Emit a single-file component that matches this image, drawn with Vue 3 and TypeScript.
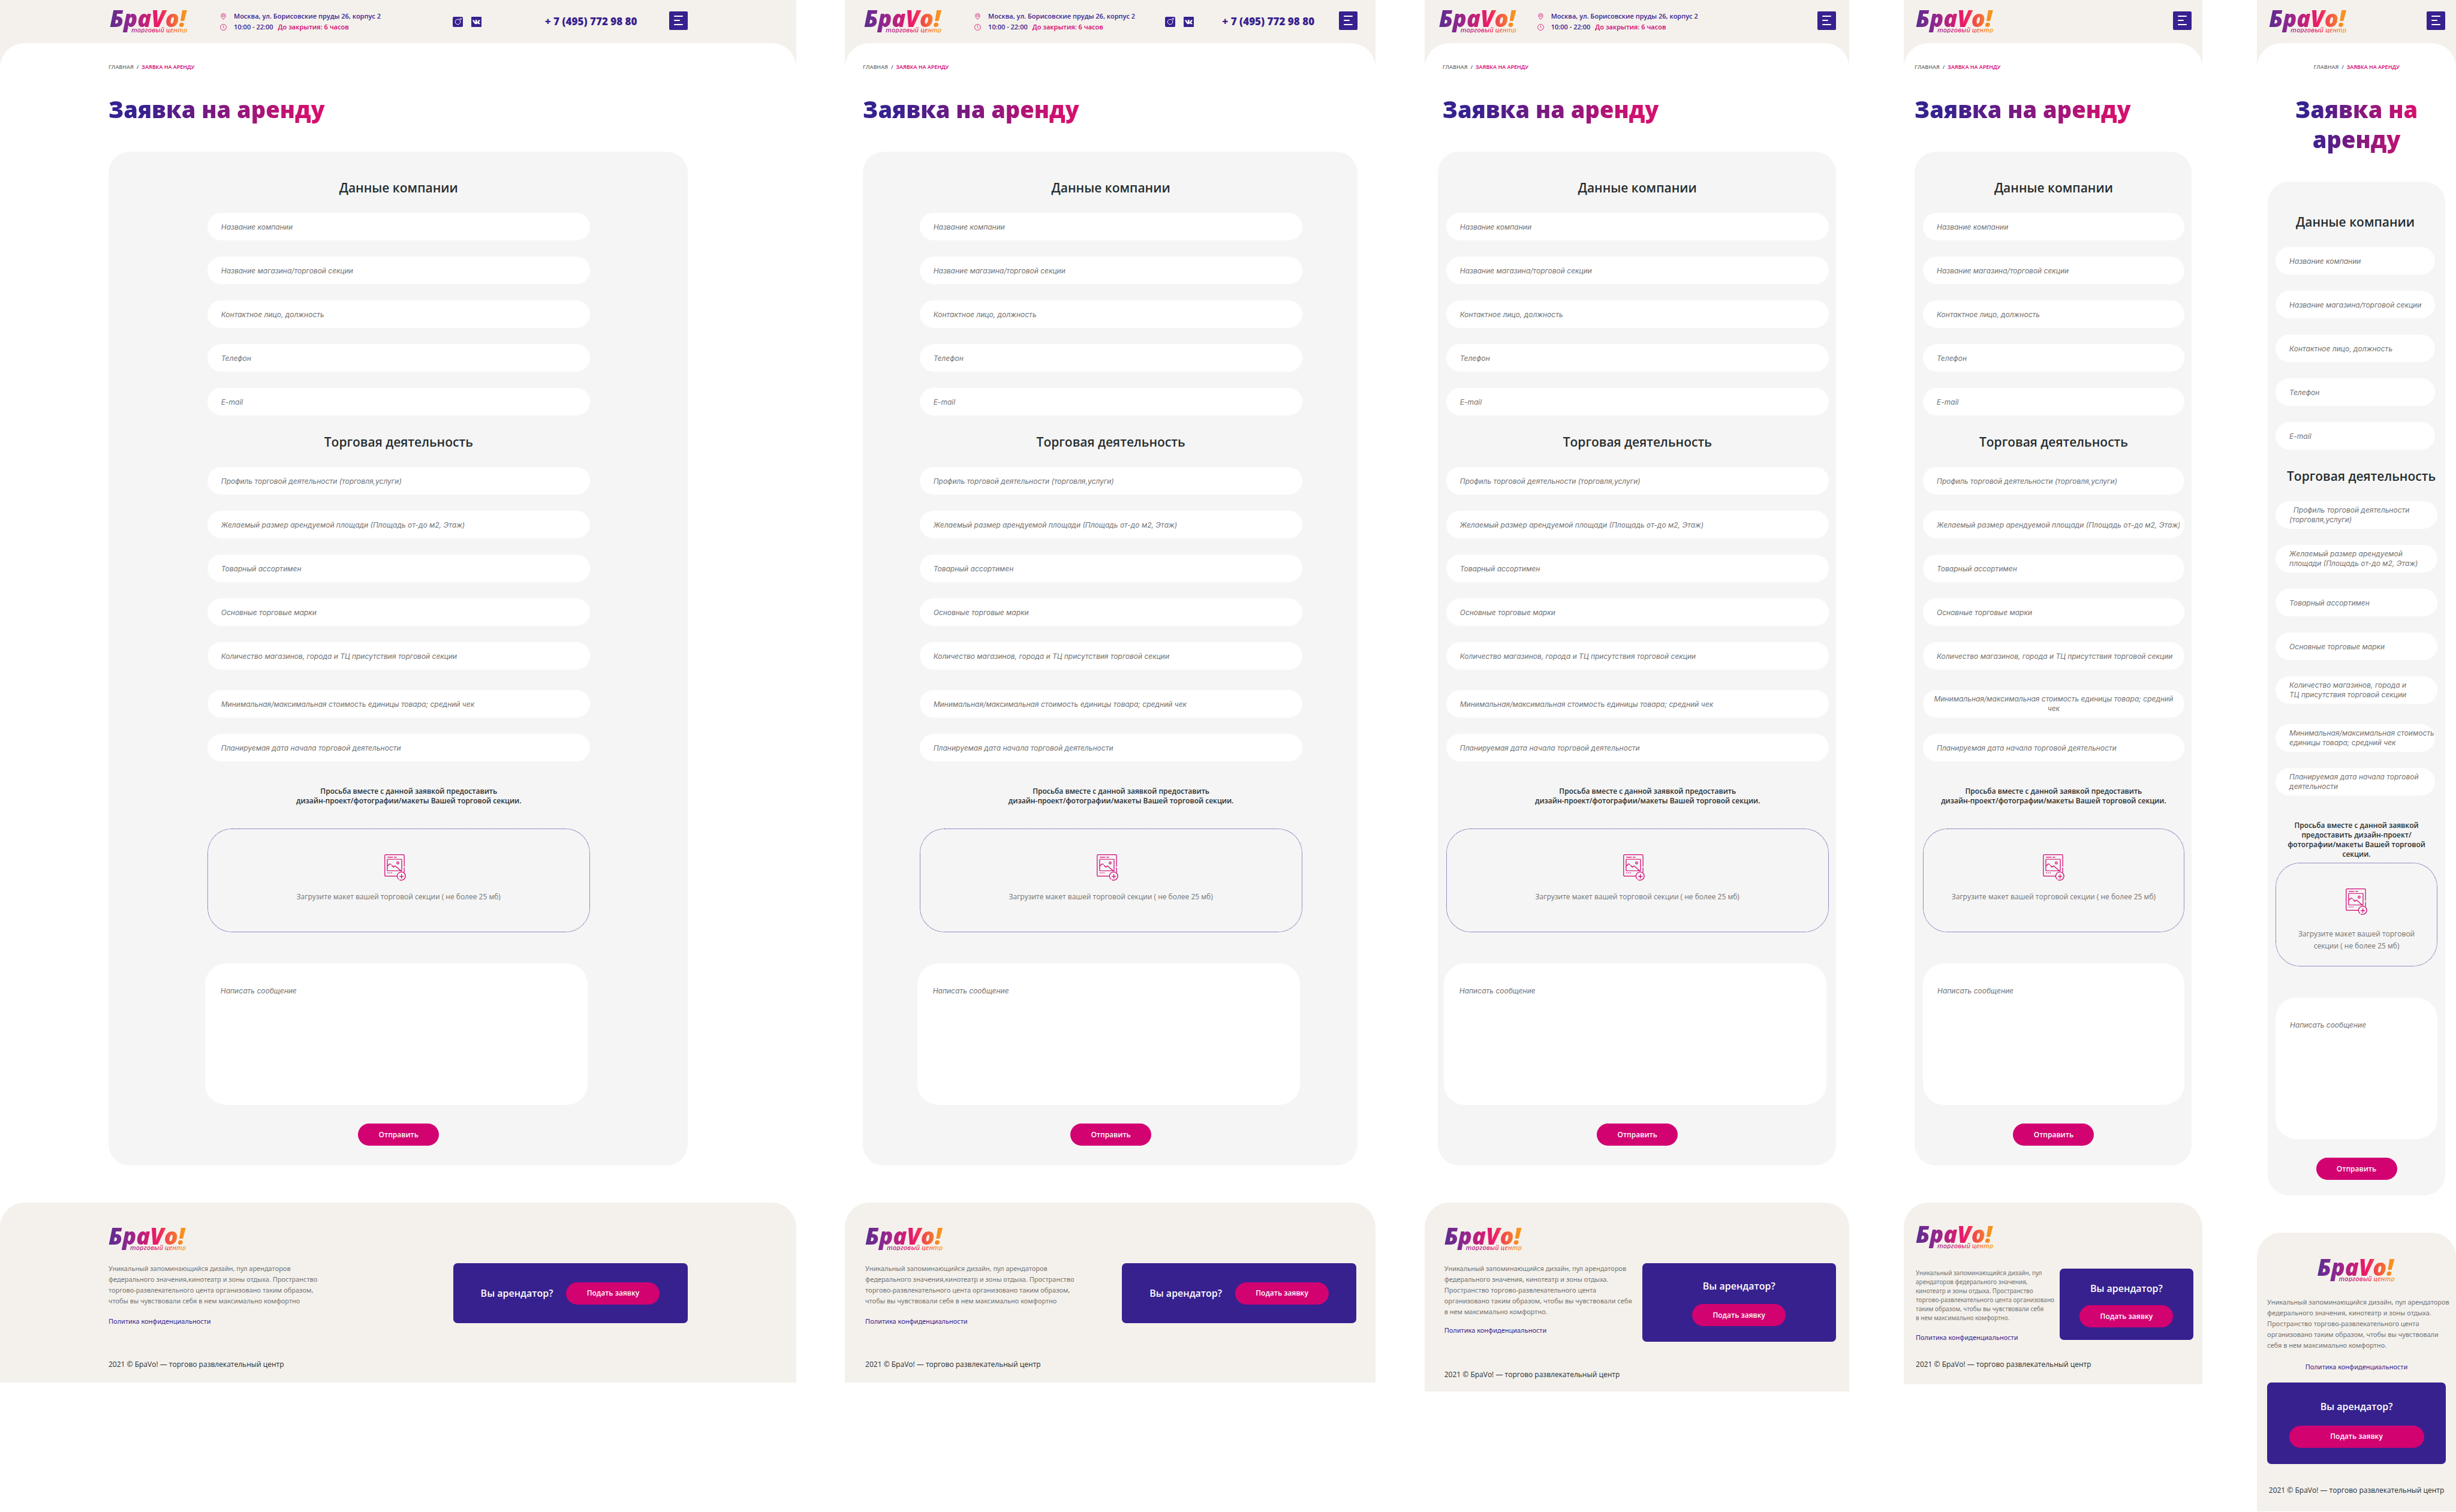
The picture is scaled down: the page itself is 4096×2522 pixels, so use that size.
<script setup lang="ts">
interface Field {
  name: string
  text: string
  rows?: number
  centered?: boolean
}

interface Group {
  key: string
  title?: string
  fields: Field[]
}

interface Board {
  id: string
  info: boolean
  contacts: boolean
  request: string
  upload: string
  about: string
  groups: Group[]
}

const contact: Group = {
  key: 'contact',
  title: 'Данные компании',
  fields: [
    { name: 'company', text: 'Название компании' },
    { name: 'shop', text: 'Название магазина/торговой секции' },
    { name: 'person', text: 'Контактное лицо, должность' },
    { name: 'phone', text: 'Телефон' },
    { name: 'email', text: 'E-mail' },
  ],
}

const trade: Group = {
  key: 'trade',
  title: 'Торговая деятельность',
  fields: [
    { name: 'profile', text: 'Профиль торговой деятельности (торговля,услуги)' },
    { name: 'area', text: 'Желаемый размер арендуемой площади (Площадь от-до м2, Этаж)' },
    { name: 'goods', text: 'Товарный ассортимен' },
    { name: 'brands', text: 'Основные торговые марки' },
    { name: 'shops', text: 'Количество магазинов, города и ТЦ присутствия торговой секции' },
  ],
}

const terms: Group = {
  key: 'terms',
  fields: [
    { name: 'price', text: 'Минимальная/максимальная стоимость единицы товара; средний чек' },
    { name: 'start', text: 'Планируемая дата начала торговой деятельности' },
  ],
}

const termsTablet: Group = {
  key: 'terms',
  fields: [
    {
      name: 'price',
      text: 'Минимальная/максимальная стоимость единицы товара; средний\nчек',
      rows: 2,
      centered: true,
    },
    { name: 'start', text: 'Планируемая дата начала торговой деятельности' },
  ],
}

const tradeMobile: Group = {
  key: 'trade',
  title: 'Торговая деятельность',
  fields: [
    { name: 'profile', text: '  Профиль торговой деятельности\n(торговля,услуги)', rows: 2 },
    { name: 'area', text: 'Желаемый размер арендуемой\nплощади (Площадь от-до м2, Этаж)', rows: 2 },
    { name: 'goods', text: 'Товарный ассортимен' },
    { name: 'brands', text: 'Основные торговые марки' },
    { name: 'shops', text: 'Количество магазинов, города и\nТЦ присутствия торговой секции', rows: 2 },
  ],
}

const termsMobile: Group = {
  key: 'terms',
  fields: [
    { name: 'price', text: 'Минимальная/максимальная стоимость\nединицы товара; средний чек', rows: 2 },
    { name: 'start', text: 'Планируемая дата начала торговой\nдеятельности', rows: 2 },
  ],
}

const request =
  'Просьба вместе с данной заявкой предоставить\nдизайн-проект/фотографии/макеты Вашей торговой секции.'
const upload = 'Загрузите макет вашей торговой секции ( не более 25 мб)'
const aboutWide =
  'Уникальный запоминающийся дизайн, пул арендаторов\nфедерального значения,кинотеатр и зоны отдыха. Пространство\nторгово-развлекательного цента организовано таким образом,\nчтобы вы чувствовали себя в нем максимально комфортно'

const boards: Board[] = [
  { id: 'xl', info: true, contacts: true, request, upload, about: aboutWide, groups: [contact, trade, terms] },
  { id: 'lg', info: true, contacts: true, request, upload, about: aboutWide, groups: [contact, trade, terms] },
  {
    id: 'md',
    info: true,
    contacts: false,
    request,
    upload,
    about:
      'Уникальный запоминающийся дизайн, пул арендаторов\nфедерального значения, кинотеатр и зоны отдыха.\nПространство торгово-развлекательного цента\nорганизовано таким образом, чтобы вы чувствовали себя\nв нем максимально комфортно.',
    groups: [contact, trade, terms],
  },
  {
    id: 'sm',
    info: false,
    contacts: false,
    request,
    upload,
    about:
      'Уникальный запоминающийся дизайн, пул\nарендаторов федерального значения,\nкинотеатр и зоны отдыха. Пространство\nторгово-развлекательного цента организовано\nтаким образом, чтобы вы чувствовали себя\nв нем максимально комфортно.',
    groups: [contact, trade, termsTablet],
  },
  {
    id: 'xs',
    info: false,
    contacts: false,
    request:
      'Просьба вместе с данной заявкой\nпредоставить дизайн-проект/\nфотографии/макеты Вашей торговой\nсекции.',
    upload: 'Загрузите макет вашей торговой\nсекции ( не более 25 мб)',
    about:
      'Уникальный запоминающийся дизайн, пул арендаторов\nфедерального значения, кинотеатр и зоны отдыха.\nПространство торгово-развлекательного цента\nорганизовано таким образом, чтобы вы чувствовали\nсебя в нем максимально комфортно.',
    groups: [contact, tradeMobile, termsMobile],
  },
]
</script>

<template>
  <div class="boards">
    <div v-for="b in boards" :key="b.id" class="board" :class="`board--${b.id}`">
      <div class="shell">
        <header class="header">
          <a class="logo" href="#">
            <span class="logo-name">БраVo!</span>
            <span class="logo-sub">торговый центр</span>
          </a>
          <div v-if="b.info" class="info">
            <p class="info-row">
              <svg class="info-icon" viewBox="0 0 16 16" aria-hidden="true">
                <path d="M8 15.2C5.200 12 2.600 9.500 2.600 6.200a5.400 5.400 0 0 1 10.800 0C13.400 9.500 10.800 12 8 15.200z" />
                <circle cx="8" cy="6.300" r="2.300" />
              </svg>
              <span>Москва, ул. Борисовские пруды 26, корпус 2</span>
            </p>
            <p class="info-row">
              <svg class="info-icon" viewBox="0 0 16 16" aria-hidden="true">
                <circle cx="8" cy="8" r="7.200" />
                <path d="M7.800 3.800V8l2.500 3" />
              </svg>
              <span>10:00 - 22:00</span>
              <span class="info-left">До закрытия: 6 часов</span>
            </p>
          </div>
          <div v-if="b.contacts" class="social">
            <a href="#" aria-label="Instagram">
              <svg viewBox="0 0 24 24">
                <rect width="24" height="24" rx="3" />
                <circle class="ring" cx="12" cy="12" r="6" />
                <circle class="ring" cx="18.800" cy="5" r="1.800" />
              </svg>
            </a>
            <a href="#" aria-label="VK">
              <svg viewBox="0 0 24 24">
                <rect width="24" height="24" rx="1" />
                <path
                  class="glyph"
                  transform="translate(3 3.200) scale(.75)"
                  d="M13.162 18.994c.609 0 .858-.406.851-.915-.031-1.917.714-2.949 2.059-1.604 1.488 1.488 1.796 2.519 3.603 2.519h3.200c.808 0 1.126-.26 1.126-.668 0-.863-1.421-2.386-2.625-3.504-1.686-1.565-1.765-1.602-.313-3.486 1.801-2.339 4.157-5.336 2.073-5.336h-3.981c-.772 0-.828.435-1.103 1.083-.995 2.347-2.886 5.387-3.604 4.922-.751-.485-.407-2.406-.35-5.261.015-.754.011-1.271-1.141-1.539-.629-.145-1.241-.205-1.809-.205-2.273 0-3.841.953-2.950 1.119 1.571.293 1.420 3.692 1.054 5.160-.638 2.556-3.036-2.024-4.035-4.305-.241-.548-.315-.974-1.175-.974h-3.255c-.492 0-.787.16-.787.516 0 .602 2.960 6.720 5.786 9.770 2.756 2.975 5.480 2.708 7.376 2.708z"
                />
              </svg>
            </a>
          </div>
          <a v-if="b.contacts" class="phone" href="tel:+74957729880">+ 7 (495) 772 98 80</a>
          <button class="burger" type="button" aria-label="Меню">
            <i></i>
            <i class="short"></i>
            <i></i>
          </button>
        </header>

        <main class="main">
          <nav class="crumbs">
            <a href="#">ГЛАВНАЯ</a>
            <span class="slash">/</span>
            <span class="current">ЗАЯВКА НА АРЕНДУ</span>
          </nav>
          <h1 class="title">Заявка на аренду</h1>

          <form class="card" @submit.prevent>
            <fieldset v-for="g in b.groups" :key="g.key" class="group" :class="`group--${g.key}`">
              <h2 v-if="g.title" class="heading">{{ g.title }}</h2>
              <template v-for="f in g.fields" :key="f.name">
                <textarea
                  v-if="f.rows"
                  class="field field--lines"
                  :class="{ 'field--centered': f.centered }"
                  :name="f.name"
                  :rows="f.rows"
                  :placeholder="f.text"
                  :aria-label="f.text"
                ></textarea>
                <input
                  v-else
                  class="field"
                  type="text"
                  :name="f.name"
                  :placeholder="f.text"
                  :aria-label="f.text"
                />
              </template>
            </fieldset>

            <p class="request">{{ b.request }}</p>

            <label class="upload">
              <input class="file" type="file" />
              <svg class="upload-icon" viewBox="0 0 52 64" aria-hidden="true">
                <path d="M31 53H3a2 2 0 0 1-2-2V3a2 2 0 0 1 2-2h43a2 2 0 0 1 2 2v26M48 33v10" />
                <path d="M8 7h12M24 7h5" />
                <rect x="7" y="12" width="35" height="28" rx="1" />
                <path d="M8 28l4-4q2-2 4 1M18 27l4 4 4-3 14 12" />
                <circle cx="32.500" cy="21" r="2.500" />
                <path d="M8 45h1M12.500 45h1M17 45h1" />
                <path d="M34 60a10 10 0 1 1 3 2M41.500 49v9M37 53.500h9" />
              </svg>
              <span class="upload-text">{{ b.upload }}</span>
            </label>

            <textarea
              class="message"
              name="message"
              placeholder="Написать сообщение"
              aria-label="Написать сообщение"
            ></textarea>
            <button class="pill submit" type="submit">Отправить</button>
          </form>
        </main>
      </div>

      <footer class="footer">
        <a class="logo" href="#">
          <span class="logo-name">БраVo!</span>
          <span class="logo-sub">торговый центр</span>
        </a>
        <div class="footer-row">
          <div class="footer-text">
            <p class="about">{{ b.about }}</p>
            <a class="policy" href="#">Политика конфиденциальности</a>
          </div>
          <section class="tenant">
            <h3>Вы арендатор?</h3>
            <button class="pill tenant-button" type="button">Подать заявку</button>
          </section>
        </div>
        <p class="copyright">2021 © БраVo! — торгово развлекательный центр</p>
      </footer>
    </div>
  </div>
</template>

<style>
body {
  background: #fff;
}
</style>

<style scoped>
* {
  box-sizing: border-box;
}

p,
h1,
h2,
h3 {
  margin: 0;
}

a {
  color: inherit;
  text-decoration: none;
}

.boards {
  display: grid;
  grid-template-columns:
    minmax(0, 1920fr) minmax(0, 118fr) minmax(0, 1280fr) minmax(0, 118fr) minmax(0, 1024fr)
    minmax(0, 132fr) minmax(0, 720fr) minmax(0, 132fr) minmax(0, 480fr);
  align-items: start;
  font-family: 'Open Sans', 'Noto Sans', sans-serif;
  color: #262d2f;
}

.board {
  --pad: 18px;
  --text-pad: 18px;
  --footer-pad: 20px;
}

.board--xl {
  --pad: 181px;
  --text-pad: 181px;
  --footer-pad: 181px;
  grid-column: 1;
}

.board--lg {
  --pad: 30px;
  --text-pad: 30px;
  --footer-pad: 34px;
  grid-column: 3;
}

.board--md {
  --pad: 22px;
  --text-pad: 30px;
  --footer-pad: 33px;
  grid-column: 5;
}

.board--sm {
  grid-column: 7;
}

.board--xs {
  --footer-pad: 18px;
  grid-column: 9;
}

.shell,
.footer {
  background: #f4f1ec;
}

.header {
  display: flex;
  align-items: center;
  height: 72px;
  padding: 0 var(--pad) 0 calc(var(--pad) + 2px);
  white-space: nowrap;
}

.logo {
  display: block;
  width: 131px;
  height: 38px;
  background: linear-gradient(90deg, #5b2d8e, #8f278f 25%, #ee1a68 62%, #f7931e 94%);
  background-clip: text;
  color: transparent;
  font-style: italic;
  white-space: nowrap;
}

.logo-name {
  display: block;
  font-size: 38px;
  font-weight: 800;
  line-height: 27px;
}

.logo-sub {
  display: block;
  padding-left: 36px;
  font-size: 11px;
  font-weight: 600;
  line-height: 11px;
}

.info {
  margin-left: 53px;
  font-size: 11px;
  font-weight: 600;
  line-height: 18px;
  color: #37218f;
}

.board--md .info {
  margin-left: 33px;
}

.info-row {
  display: flex;
  align-items: center;
}

.info-icon {
  width: 11px;
  height: 11px;
  margin-right: 12px;
  fill: none;
  stroke: #d20271;
  stroke-width: 1.2;
}

.info-left {
  margin-left: 8px;
  color: #d20271;
}

.social {
  display: flex;
  gap: 14px;
  margin-left: auto;
}

.social svg {
  display: block;
  width: 17px;
  height: 17px;
  fill: #37218f;
}

.social .ring {
  fill: none;
  stroke: #fff;
  stroke-width: 1.4;
}

.social .glyph {
  fill: #fff;
}

.phone {
  margin: 0 41px 0 47px;
  font-size: 17px;
  font-weight: 800;
  line-height: 24px;
  color: #37218f;
}

.board--xl .phone {
  margin: 0 53px 0 106px;
}

.burger {
  display: flex;
  flex-direction: column;
  align-items: flex-start;
  justify-content: center;
  gap: 5px;
  width: 31px;
  height: 31px;
  margin: 0 0 4px;
  padding: 0 8px;
  border: 0;
  border-radius: 2px;
  background: #37218f;
}

.board--md .burger,
.board--sm .burger,
.board--xs .burger {
  margin-left: auto;
}

.burger i {
  width: 15px;
  height: 2px;
  border-radius: 1px;
  background: #fff;
}

.burger .short {
  width: 10px;
}

.main {
  padding: 32px var(--pad) 62px;
  border-radius: 41px 41px 0 0;
  background: #fff;
}

.crumbs {
  display: flex;
  gap: 5px;
  margin-left: calc(var(--text-pad) - var(--pad));
  font-size: 9px;
  font-weight: 600;
  line-height: 16px;
  color: #727272;
}

.slash {
  color: #1f5fa8;
}

.current {
  color: #d20271;
}

.title {
  width: fit-content;
  margin: 37px 0 46px calc(var(--text-pad) - var(--pad));
  background: linear-gradient(90deg, #37218f 15%, #d4106e 92%);
  background-clip: text;
  color: transparent;
  font-size: 38px;
  font-weight: 800;
  line-height: 50px;
}

.board--xs .crumbs {
  justify-content: center;
}

.board--xs .title {
  max-width: 220px;
  margin-right: auto;
  margin-left: auto;
  text-align: center;
}

.card {
  display: flex;
  flex-direction: column;
  align-items: center;
  padding: 45px 12px 33px 14px;
  border-radius: 35px;
  background: #f5f5f5;
}

.board--xs .card {
  padding: 52px 13px 26px;
}

.group {
  display: flex;
  flex-direction: column;
  gap: 27px;
  width: 100%;
  max-width: 638px;
  min-width: 0;
  margin: 0;
  padding: 0;
  border: 0;
}

.group--trade {
  margin-top: 29px;
}

.group--terms {
  margin-top: 34px;
}

.board--xs .group--contact,
.board--xs .group--terms {
  padding-right: 4px;
}

.heading {
  font-size: 21px;
  font-weight: 600;
  line-height: 30px;
  text-align: center;
  white-space: nowrap;
}

.board--xs .group--trade .heading {
  padding-left: 16px;
}

.field {
  display: block;
  width: 100%;
  height: 46px;
  margin: 0;
  padding: 0 8px 0 23px;
  border: 0;
  border-radius: 23px;
  background: #fff;
  font: italic 400 12px/18px Inter, 'Open Sans', sans-serif;
  color: #262d2f;
}

.field--lines {
  padding: 7px 0 7px 23px;
  line-height: 16px;
  overflow: hidden;
  resize: none;
  white-space: pre;
}

.field--centered {
  padding: 7px 0;
  text-align: center;
}

.field::placeholder,
.message::placeholder {
  color: #727272;
  opacity: 1;
}

.request {
  min-height: 70px;
  margin-top: 42px;
  padding-left: 34px;
  font-size: 12px;
  font-weight: 600;
  line-height: 16px;
  text-align: center;
  white-space: pre-line;
}

.board--sm .request,
.board--xs .request {
  padding-left: 0;
}

.upload {
  display: flex;
  flex-direction: column;
  align-items: center;
  gap: 17px;
  width: 100%;
  max-width: 638px;
  height: 173px;
  padding-top: 42px;
  border: 1px dotted #37218f;
  border-radius: 41px;
  font-size: 12px;
  line-height: 20px;
  color: #727272;
  text-align: center;
  white-space: pre-line;
}

.board--xs .upload {
  gap: 22px;
}

.file {
  position: absolute;
  width: 1px;
  height: 1px;
  opacity: 0;
}

.upload-icon {
  width: 36px;
  height: 44px;
  margin-right: 12px;
  fill: none;
  stroke: #d20271;
  stroke-width: 1.8;
  stroke-linecap: round;
}

.board--sm .upload-icon,
.board--xs .upload-icon {
  margin-right: 0;
}

.message {
  display: block;
  width: 100%;
  max-width: 638px;
  height: 236px;
  margin: 52px 8px 31px 0;
  padding: 37px 26px;
  border: 0;
  border-radius: 35px;
  background: #fff;
  font: italic 400 12px/18px Inter, 'Open Sans', sans-serif;
  color: #262d2f;
  resize: none;
}

.board--sm .message,
.board--xs .message {
  margin-right: 0;
  padding: 37px 24px;
}

.pill {
  height: 37px;
  padding: 0;
  border: 0;
  border-radius: 19px;
  background: #d20271;
  font: 600 12px/18px 'Open Sans', 'Noto Sans', sans-serif;
  color: #fff;
}

.submit {
  width: 135px;
}

.footer {
  padding: 42px var(--pad) 21px var(--footer-pad);
  border-radius: 41px 41px 0 0;
}

.footer-row {
  display: flex;
  align-items: flex-start;
  justify-content: space-between;
  margin: 21px 0 54px;
}

.about,
.policy {
  font-family: 'Noto Sans', 'Open Sans', sans-serif;
  font-size: 11px;
  line-height: 18px;
}

.about {
  margin-bottom: 16px;
  color: #727272;
  white-space: pre;
}

.policy {
  display: block;
  color: #37218f;
}

.tenant {
  display: flex;
  align-items: center;
  justify-content: center;
  gap: 22px;
  width: 391px;
  height: 100px;
  border-radius: 7px;
  background: #37218f;
  color: #fff;
}

.tenant h3 {
  font-size: 16px;
  font-weight: 600;
  line-height: 24px;
}

.tenant-button {
  width: 156px;
}

.copyright {
  font-size: 12px;
  line-height: 18px;
}

.board--lg .footer {
  padding-right: 32px;
}

.board--md .tenant,
.board--sm .tenant,
.board--xs .tenant {
  flex-direction: column;
  gap: 18px;
}

.board--md .tenant {
  width: 323px;
  height: 131px;
}

.board--md .footer {
  padding-bottom: 19px;
}

.board--md .footer-row {
  margin-bottom: 46px;
}

.board--md .about {
  margin-bottom: 13px;
}

.board--sm .footer {
  padding: 39px 15px 24px 20px;
}

.board--sm .footer-row {
  margin: 33px 0 27px;
}

.board--sm .about {
  font-size: 10px;
  line-height: 15px;
}

.board--sm .tenant {
  gap: 16px;
  width: 223px;
  height: 119px;
}

.board--xs .footer {
  padding: 44px 17px 26px;
}

.board--xs .footer .logo {
  margin: 0 auto;
}

.board--xs .footer-row {
  flex-direction: column;
  gap: 17px;
  margin: 25px 0 35px;
}

.board--xs .footer-text,
.board--xs .tenant {
  width: 100%;
}

.board--xs .about {
  margin-bottom: 18px;
}

.board--xs .policy,
.board--xs .copyright {
  text-align: center;
}

.board--xs .tenant {
  gap: 20px;
  height: 136px;
}

.board--xs .tenant-button {
  width: 225px;
}
</style>
